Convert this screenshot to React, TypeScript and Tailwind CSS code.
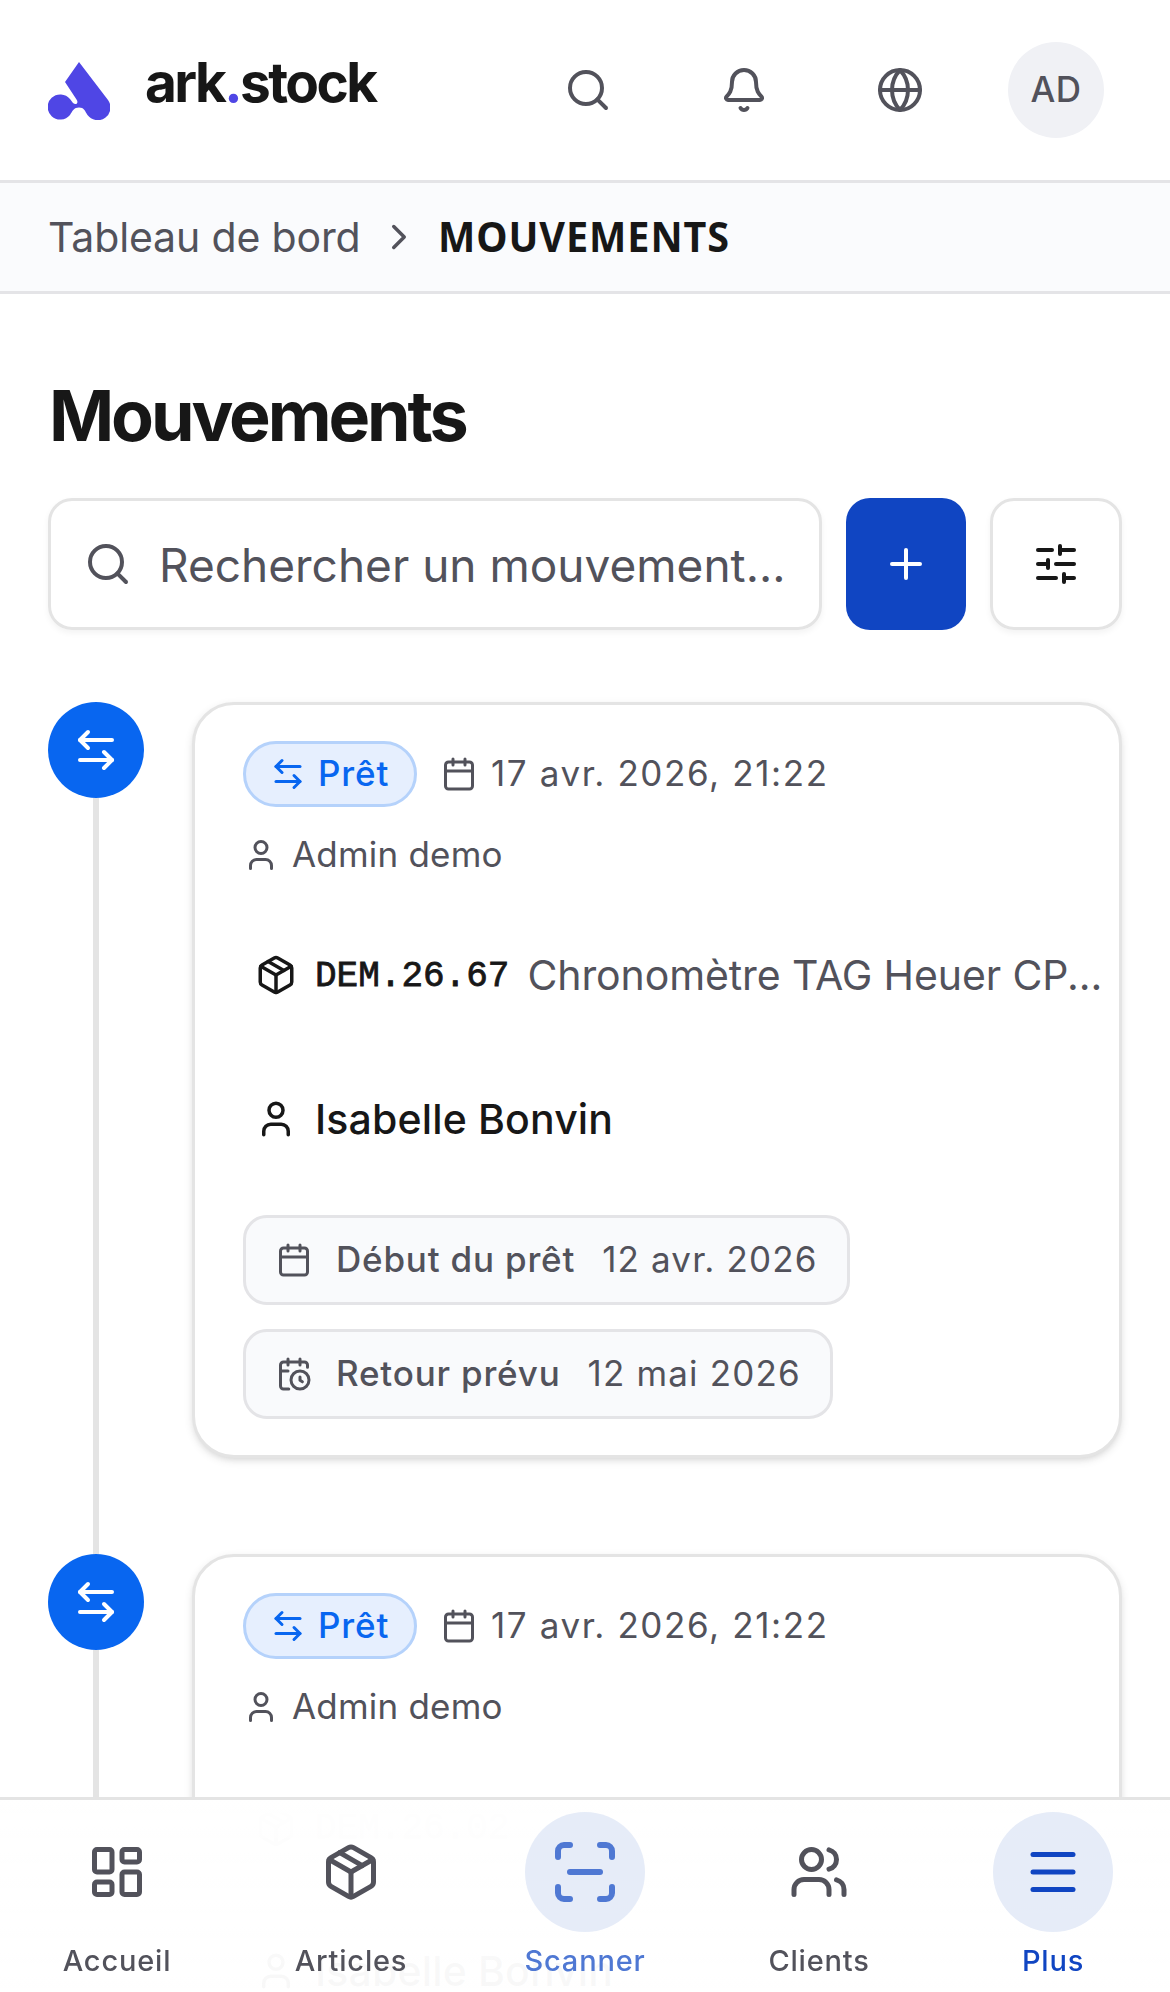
import React from "react";
import {
  ArrowLeftRight,
  Bell,
  Calendar,
  CalendarClock,
  ChevronRight,
  Globe,
  LayoutDashboard,
  Menu,
  Package,
  Plus,
  ScanLine,
  Search,
  SlidersHorizontal,
  User,
  Users,
} from "lucide-react";

interface Movement {
  id: number;
  date: string;
  author: string;
  code: string;
  article: string;
  client: string;
  start: string;
  end: string;
}

const movements: Movement[] = [
  {
    id: 1,
    date: "17 avr. 2026, 21:22",
    author: "Admin demo",
    code: "DEM.26.67",
    article: "Chronomètre TAG Heuer CP...",
    client: "Isabelle Bonvin",
    start: "12 avr. 2026",
    end: "12 mai 2026",
  },
  {
    id: 2,
    date: "17 avr. 2026, 21:22",
    author: "Admin demo",
    code: "DEM.26.02",
    article: "",
    client: "Isabelle Bonvin",
    start: "12 avr. 2026",
    end: "12 mai 2026",
  },
];

const Logo = () => (
  <svg viewBox="0 0 62 58" className="mt-0.5 h-[58px] w-[62px] fill-[#4f46e5]">
    <path d="M31 0 17 20 28.500 37.500C31 41 28 43.500 25 41L22 37A12.600 12.600 0 1 0 22 53C24.500 49 26 45.500 31 45.500S37 49 39.500 53A12.600 12.600 0 0 0 60 38Z" />
  </svg>
);

const Header = () => (
  <header className="flex h-[183px] items-center border-b-[3px] border-[#e4e4e7] bg-white pr-9 pl-12">
    <div className="flex flex-1 items-center">
      <Logo />
      <span className="ml-[35px] -translate-y-2 text-[55px] leading-none font-bold tracking-[-2.6px] text-[#171717]">
        ark<span className="text-[#4f46e5]">.</span>stock
      </span>
    </div>
    <div className="grid grid-cols-[156px_156px_156px_156px] place-items-center text-[#52525b]">
      <Search size={48} />
      <Bell size={48} />
      <Globe size={48} />
      <div className="flex size-24 items-center justify-center rounded-full bg-[#f0f1f5] pb-0.5 text-[35px] font-medium tracking-[0.4px]">
        AD
      </div>
    </div>
  </header>
);

const Breadcrumb = () => (
  <nav className="flex h-[111px] items-center border-b-[3px] border-[#e4e4e7] bg-[#fafbfd] pl-12 text-[41px] text-[#52525b]">
    <span className="w-[330px] pt-0.5 tracking-[-0.15px] whitespace-nowrap">Tableau de bord</span>
    <ChevronRight size={42} />
    <span className="ml-[18px] origin-left scale-x-[0.942] pb-[3px] font-['Noto_Sans'] text-[42px] font-bold tracking-[1px] text-[#171717]">
      MOUVEMENTS
    </span>
  </nav>
);

const DateChip = ({
  icon,
  label,
  value,
}: {
  icon: React.ReactNode;
  label: string;
  value: string;
}) => (
  <div className="flex h-[90px] items-center rounded-[24px] border-[3px] border-[#e4e4e7] bg-[#f9fafc] pr-[29px] pl-[30px] text-[35px] whitespace-nowrap">
    {icon}
    <span className="ml-6 pb-0.5 font-medium tracking-[0.8px]">{label}</span>
    <span className="ml-[27px] pb-0.5 tracking-[1.15px]">{value}</span>
  </div>
);

const MovementItem = ({ item }: { item: Movement }) => (
  <li className="flex h-[852px] items-start">
    <div className="flex h-full w-24 flex-col items-center">
      <div className="flex size-24 shrink-0 items-center justify-center rounded-full bg-[#0866f0] text-white">
        <ArrowLeftRight size={48} />
      </div>
      <div className="w-[6px] flex-1 bg-[#e4e4e4]" />
    </div>
    <article className="ml-12 h-[756px] w-[930px] rounded-[42px] border-[3px] border-[#e4e4e4] bg-white pt-9 pl-12 text-[#52525b] shadow-[0_3px_9px_rgba(0,0,0,0.1),0_3px_6px_-3px_rgba(0,0,0,0.1)]">
      <div className="flex h-[66px] items-center text-[35px]">
        <span className="flex h-[66px] w-[174px] items-center rounded-full border-[3px] border-[#b5d2fb] bg-[#e6effe] pl-6 font-medium text-[#0866f0]">
          <ArrowLeftRight size={36} />
          <span className="ml-3 pb-0.5 tracking-[0.9px]">Prêt</span>
        </span>
        <Calendar size={36} className="ml-6" />
        <span className="ml-[14px] pb-0.5 tracking-[1.6px] whitespace-nowrap">{item.date}</span>
      </div>
      <div className="mt-[27px] flex h-[42px] items-center text-[35px]">
        <User size={36} />
        <span className="ml-[13px] pb-0.5 tracking-[0.2px]">{item.author}</span>
      </div>
      <div className="mt-[75px] flex h-[48px] items-center pl-3 text-[#171717]">
        <Package size={42} />
        <span className="ml-[18px] pt-1 font-['Liberation_Mono'] text-[36px] [-webkit-text-stroke:0.8px_#171717]">
          {item.code}
        </span>
        <span className="ml-[18px] pt-0.5 text-[41px] tracking-[-0.1px] whitespace-nowrap text-[#52525b]">
          {item.article}
        </span>
      </div>
      <div className="mt-24 flex h-12 items-center pl-3 text-[41px] font-medium text-[#171717]">
        <User size={42} />
        <span className="ml-[18px] pt-0.5 tracking-[0.15px]">{item.client}</span>
      </div>
      <div className="mt-[72px] flex flex-col items-start gap-6">
        <DateChip
          icon={<Calendar size={36} />}
          label="Début du prêt"
          value={item.start}
        />
        <DateChip
          icon={<CalendarClock size={36} />}
          label="Retour prévu"
          value={item.end}
        />
      </div>
    </article>
  </li>
);

const tabs = [
  { label: "Accueil", icon: <LayoutDashboard size={60} />, style: "text-[#52525b]", bubble: "" },
  { label: "Articles", icon: <Package size={60} />, style: "text-[#52525b]", bubble: "" },
  { label: "Scanner", icon: <ScanLine size={72} />, style: "text-[#4f78d3]", bubble: "bg-[#e6ecf8]" },
  { label: "Clients", icon: <Users size={60} />, style: "text-[#52525b]", bubble: "" },
  { label: "Plus", icon: <Menu size={60} />, style: "text-[#1045c2]", bubble: "bg-[#e6ecf8]" },
];

const BottomNav = () => (
  <nav className="fixed inset-x-0 bottom-0 grid h-[195px] grid-cols-5 border-t-[3px] border-[#e4e4e4] bg-linear-to-b from-white to-white/[0.97]">
    {tabs.map((tab) => (
      <div key={tab.label} className={"flex flex-col items-center pt-3 " + tab.style}>
        <div className={"flex size-[120px] items-center justify-center rounded-full " + tab.bubble}>
          {tab.icon}
        </div>
        <span className="mt-[11px] text-[29px] leading-9 font-medium tracking-[0.8px]">
          {tab.label}
        </span>
      </div>
    ))}
  </nav>
);

export default function App() {
  return (
    <div className="h-[1992px] overflow-hidden bg-white font-['Inter',sans-serif]">
      <Header />
      <Breadcrumb />
      <main className="px-12">
        <h1 className="mt-[84px] ml-px h-[75px] text-[70px] leading-[75px] font-bold tracking-[-3.1px] text-[#171717]">
          Mouvements
        </h1>
        <div className="mt-[45px] flex h-[132px] gap-6">
          <div className="flex w-[774px] items-center rounded-[24px] border-[3px] border-[#e4e4e4] pl-[33px] text-[#52525b] shadow-[0_3px_6px_rgba(0,0,0,0.05)]">
            <Search size={48} />
            <span className="ml-[27px] pt-0.5 text-[46px] whitespace-nowrap">
              Rechercher un mouvement...
            </span>
          </div>
          <button className="flex w-[120px] items-center justify-center rounded-[24px] bg-[#1045c2] text-white">
            <Plus size={48} />
          </button>
          <button className="flex w-[132px] items-center justify-center rounded-[24px] border-[3px] border-[#e4e4e4] text-[#171717] shadow-[0_3px_6px_rgba(0,0,0,0.05)]">
            <SlidersHorizontal size={48} />
          </button>
        </div>
        <ul className="mt-[72px]">
          {movements.map((item) => (
            <MovementItem key={item.id} item={item} />
          ))}
        </ul>
      </main>
      <BottomNav />
    </div>
  );
}
